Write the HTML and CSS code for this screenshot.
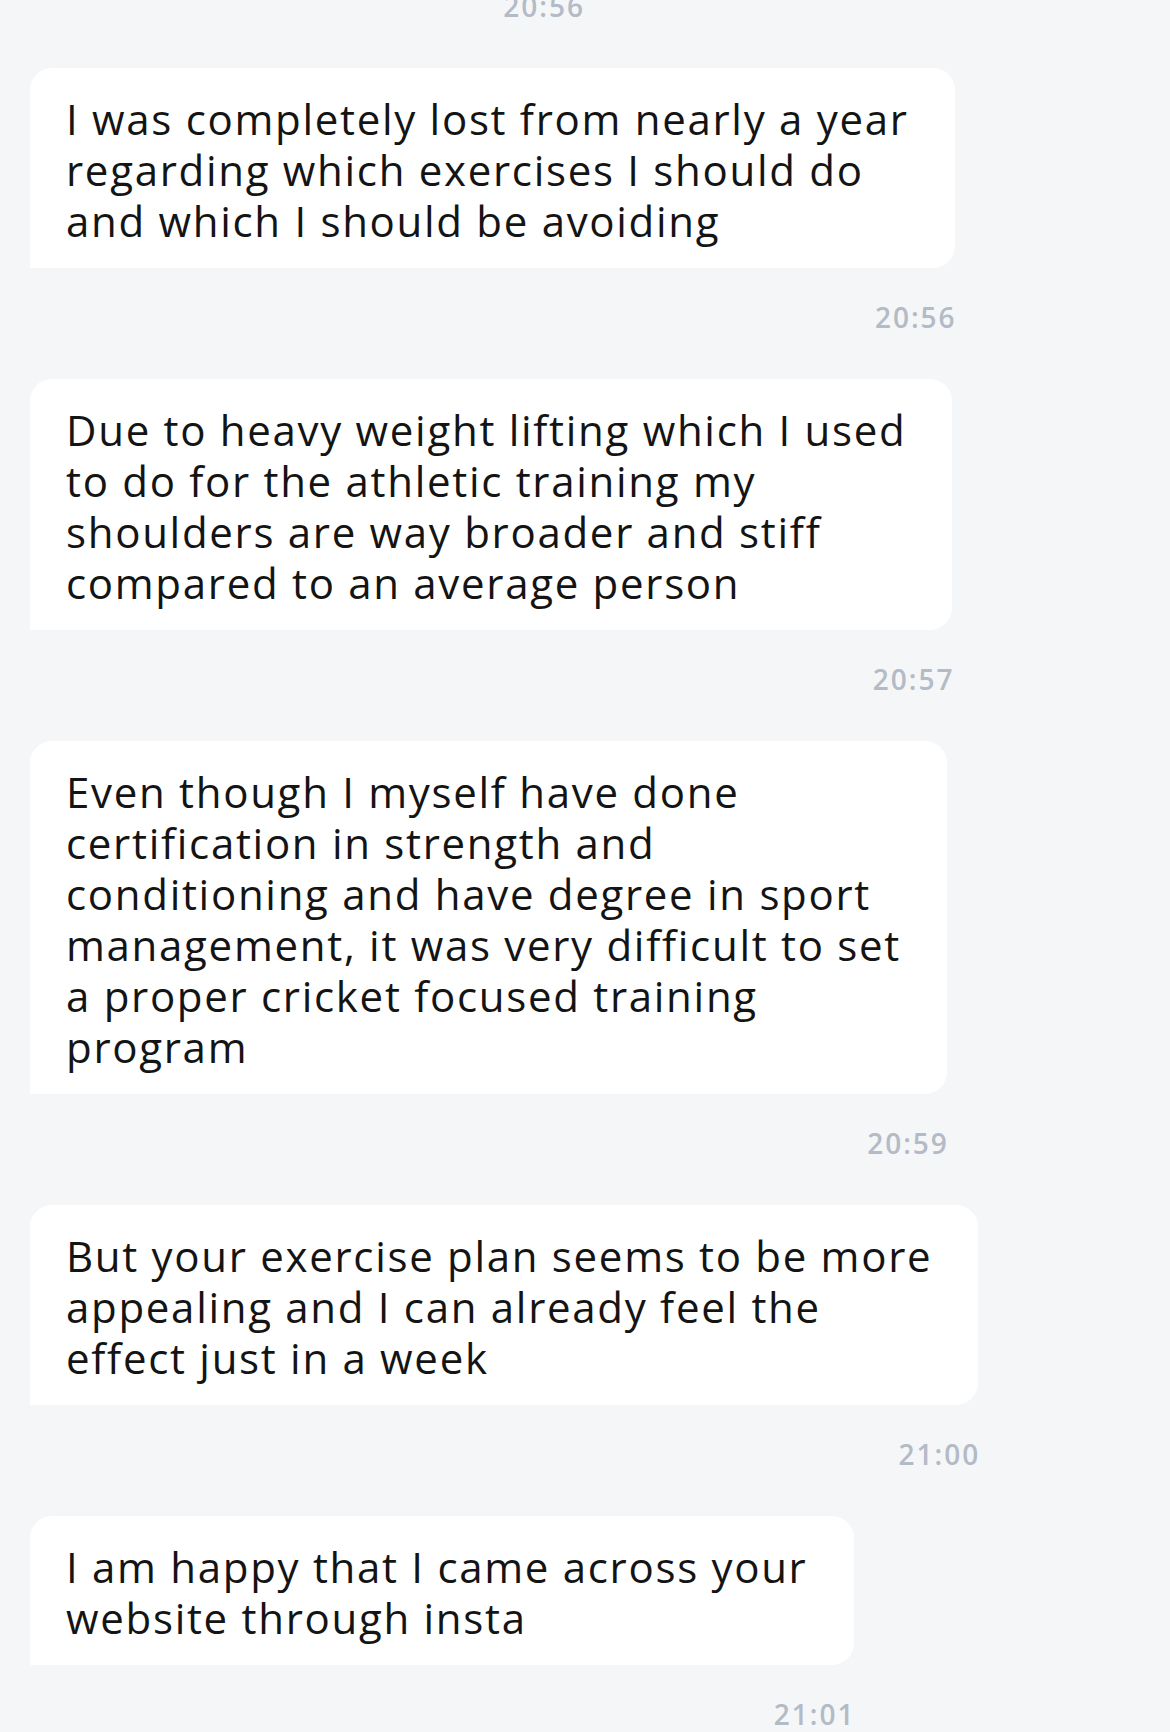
FILE: index.html
```html
<!DOCTYPE html>
<html lang="en">
<head>
<meta charset="utf-8">
<title>Chat</title>
<link rel="stylesheet" href="styles.css">
</head>
<body>
<div class="chat">
  <div class="msg first">
    <div class="time prev">20:56</div>
  </div>
  <div class="msg">
    <div class="bubble">I was completely lost from nearly a year<br>regarding which exercises I should do<br>and which I should be avoiding</div>
    <div class="time">20:56</div>
  </div>
  <div class="msg">
    <div class="bubble">Due to heavy weight lifting which I used<br>to do for the athletic training my<br>shoulders are way broader and stiff<br>compared to an average person</div>
    <div class="time">20:57</div>
  </div>
  <div class="msg">
    <div class="bubble">Even though I myself have done<br>certification in strength and<br>conditioning and have degree in sport<br>management, it was very difficult to set<br>a proper cricket focused training<br>program</div>
    <div class="time">20:59</div>
  </div>
  <div class="msg">
    <div class="bubble">But your exercise plan seems to be more<br>appealing and I can already feel the<br>effect just in a week</div>
    <div class="time">21:00</div>
  </div>
  <div class="msg">
    <div class="bubble">I am happy that I came across your<br>website through insta</div>
    <div class="time">21:01</div>
  </div>
</div>
</body>
</html>
```

FILE: styles.css
```css
html, body {
  margin: 0;
  padding: 0;
  background: #f5f6f8;
}
.chat {
  padding: 0 0 0 30px;
  display: flex;
  flex-direction: column;
  align-items: flex-start;
  height: 1732px;
  overflow: hidden;
  box-sizing: border-box;
}
.msg {
  display: flex;
  flex-direction: column;
  width: max-content;
  margin-bottom: 47px;
}
.msg.first {
  margin-top: -9px;
  width: 553px;
}
.bubble {
  background: #ffffff;
  border-radius: 22px 22px 22px 0;
  padding: 25px 46px 22px 36px;
  font-family: "Open Sans", sans-serif;
  font-size: 42px;
  line-height: 51px;
  letter-spacing: 1.7px;
  color: #141414;
  white-space: nowrap;
}
.time {
  margin-top: 34px;
  text-align: right;
  font-family: "Open Sans", sans-serif;
  font-weight: 600;
  font-size: 28px;
  line-height: 30px;
  letter-spacing: 2px;
  margin-right: -2px;
  color: #b3bbc6;
}
.first .time {
  margin-top: 0;
}
```
